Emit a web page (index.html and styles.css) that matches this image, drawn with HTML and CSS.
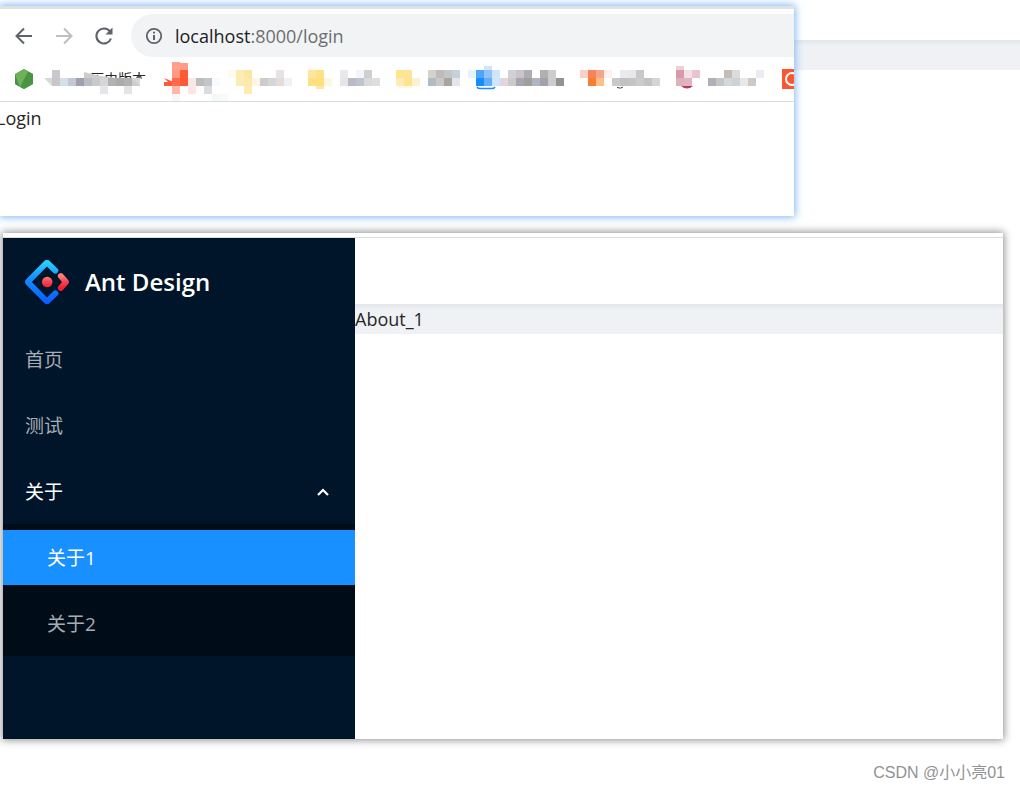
FILE: index.html
```html
<!DOCTYPE html>
<html lang="zh-CN">
<head>
<meta charset="utf-8">
<title>Ant Design</title>
<link rel="stylesheet" href="styles.css">
</head>
<body>
<section class="stage">
  <div class="band backdrop"></div>
  <div class="browser">
    <div class="toolbar">
      <button class="tool" aria-label="Back"><svg width="20" height="20" viewBox="0 0 20 20"><path d="M18 10H3M10 2.500L2.500 10L10 17.500" fill="none" stroke="#5f6368" stroke-width="2"/></svg></button>
      <button class="tool" aria-label="Forward"><svg width="20" height="20" viewBox="0 0 20 20"><path d="M2 10H17M10 2.500L17.500 10L10 17.500" fill="none" stroke="#bdbebf" stroke-width="2"/></svg></button>
      <button class="tool" aria-label="Reload"><svg width="20" height="20" viewBox="0 0 20 20"><path d="M16 5.500A7.500 7.500 0 1 0 17 12.500" fill="none" stroke="#5f6368" stroke-width="2.100"/><path d="M18.500 1.500V8.500H11.500Z" fill="#5f6368"/></svg></button>
      <div class="address">
        <svg width="18" height="18" viewBox="0 0 18 18"><circle cx="9" cy="9" r="7.200" fill="none" stroke="#5f6368" stroke-width="1.800"/><path d="M9 8V13M9 4.800V6.600" stroke="#5f6368" stroke-width="2"/></svg>
        <span class="url">localhost<span class="path">:8000/login</span></span>
      </div>
    </div>
    <nav class="bookmarks">
      <a class="bookmark" href="#"><svg width="20" height="20" viewBox="0 0 20 20"><path d="M10 0L19 5V15L10 20L1 15V5Z" fill="#5fa64d"/><path d="M1 5L6 18L1 15Z" fill="#479244"/><path d="M14 2.500L19 5V15L10 20L6 18Z" fill="#499544"/><path d="M10 0L14 2.500L6 18L1 5Z" fill="#6db158"/></svg><span>历史版本</span></a>
      <svg class="mosaic" width="800" height="46" viewBox="0 58 800 46">
        <path d="M84 84L148 78V86L132 96L96 92Z M132 96L240 92L210 103L136 103Z" fill="#fff"/>
        <path d="M44 78H140L140 86H52Z" fill="#d8d8d8"/>
        <path d="M84 72L100 76L134 80L140 86H84Z" fill="#cdcdcd"/>
        <rect x="52" y="70" fill="#c9c9cb"/><rect x="52" y="78" fill="#c8c6c8"/><rect x="60" y="78" fill="#d4e0ec"/><rect x="68" y="78" fill="#c4c8d0"/><rect x="76" y="78" fill="#a0a0ac"/><rect x="84" y="78" fill="#b8bcc4"/><rect x="92" y="78" fill="#cac8c8"/><rect x="100" y="78" fill="#d6d6d6"/><rect x="108" y="78" fill="#b0b2b6"/><rect x="116" y="78" fill="#a8acac"/><rect x="124" y="78" fill="#b4b2b0"/><rect x="100" y="86" fill="#e4e6ec"/><rect x="124" y="86" fill="#e4e4e4"/>
        <path d="M164 78L174 82V86H164V82H168Z" fill="#ff5c3c"/>
        <rect x="172" y="62" fill="#ffa08a"/><rect x="180" y="63" fill="#ff9c88"/><rect x="172" y="70" fill="#ff9a80"/><rect x="180" y="70" fill="#ff5a36"/><rect x="172" y="78" fill="#ff6a4c"/><rect x="180" y="78" fill="#ff5835"/><rect x="188" y="78" fill="#f6e8e6"/><rect x="172" y="86" fill="#ffb8a8"/><rect x="188" y="86" fill="#ffe6e4"/><rect x="172" y="94" fill="#f6f8f8"/>
        <rect x="196" y="78" fill="#bcbcb8"/><rect x="204" y="78" fill="#c0c6ca"/><rect x="212" y="78" fill="#f6fbff"/><rect x="204" y="86" fill="#dadcdf"/><rect x="212" y="94" fill="#f5f8f8"/><rect x="220" y="94" fill="#f8fafa"/>
        <rect x="228" y="70" fill="#fffaea"/><rect x="236" y="70" fill="#fbebb4"/><rect x="244" y="70" fill="#fbe6a2"/><rect x="236" y="78" fill="#fbebb4"/><rect x="244" y="78" fill="#fbeaaf"/><rect x="252" y="78" fill="#fdf6e0"/><rect x="244" y="86" fill="#fdebb2"/><rect x="260" y="78" fill="#cccccc"/><rect x="268" y="78" fill="#d6d6d6"/><rect x="276" y="78" fill="#e4dcd6"/><rect x="284" y="78" fill="#edf0f6"/><rect x="276" y="70" fill="#e6e3e6"/>
        <rect x="308" y="68" fill="#fff8e0"/><rect x="316" y="81" fill="#fee8a0"/><rect x="308" y="70" fill="#fde6a0"/><rect x="316" y="70" fill="#fde182"/><rect x="308" y="78" fill="#fde082"/><rect x="316" y="78" fill="#fde080"/><rect x="324" y="78" fill="#fdf6e0"/><rect x="340" y="70" fill="#e8e8ea"/><rect x="356" y="70" fill="#f2f5fb"/><rect x="364" y="70" fill="#ccd0d0"/><rect x="340" y="78" fill="#e6e6e8"/><rect x="348" y="78" fill="#b9bac4"/><rect x="356" y="78" fill="#bdc4cb"/><rect x="364" y="78" fill="#dadadb"/><rect x="372" y="78" fill="#dedede"/>
        <rect x="396" y="70" fill="#fee48a"/><rect x="404" y="70" fill="#fee498"/><rect x="396" y="78" fill="#feecb8"/><rect x="404" y="78" fill="#fee48f"/><rect x="412" y="78" fill="#fdf2d0"/><path d="M398 87H413" stroke="#fdf2c8"/><rect x="428" y="70" fill="#d4d2cb"/><rect x="436" y="70" fill="#c0bab8"/><rect x="444" y="70" fill="#c3c6c8"/><rect x="452" y="70" fill="#c8d0dc"/><rect x="428" y="78" fill="#b2bac8"/><rect x="436" y="78" fill="#c8c8c8"/><rect x="444" y="78" fill="#aba5a0"/><rect x="452" y="78" fill="#e4e6ec"/>
        <rect x="484" y="66" fill="#cfe5fd"/><rect x="468" y="70" fill="#e6f2ff"/><rect x="476" y="70" fill="#4fa5f6"/><rect x="484" y="70" fill="#8fc3f8"/><rect x="492" y="70" fill="#cfe5fd"/><rect x="476" y="78" fill="#1a8cf8"/><rect x="484" y="78" fill="#63aef8"/><rect x="492" y="78" fill="#cfe5fd"/><path d="M477 87Q478 88.500 480 88.500H492Q494 88.500 495 87" fill="none" stroke="#1a8cf8" stroke-width="1.500"/>
        <rect x="500" y="78" fill="#e0d6dc"/><rect x="508" y="70" fill="#d0d0d6"/><rect x="516" y="70" fill="#cac4ca"/><rect x="524" y="70" fill="#b0adb2"/><rect x="540" y="70" fill="#b0b0ac"/><rect x="548" y="70" fill="#cccccc"/><rect x="508" y="78" fill="#cacaca"/><rect x="516" y="78" fill="#a9a4ae"/><rect x="524" y="78" fill="#9fa09c"/><rect x="532" y="78" fill="#b0b6c0"/><rect x="540" y="78" fill="#a2a2ae"/><rect x="548" y="78" fill="#cccccc"/><rect x="556" y="78" fill="#939392"/>
        <rect x="580" y="70" fill="#fbcfc4"/><rect x="588" y="70" fill="#f4835e"/><rect x="596" y="70" fill="#f4a488"/><rect x="604" y="70" fill="#fff0ee"/><rect x="588" y="78" fill="#f87e30"/><rect x="596" y="78" fill="#fdbe88"/><rect x="612" y="78" fill="#cac9ca"/><rect x="620" y="78" fill="#bfc1c5"/><rect x="628" y="78" fill="#c3c4c4"/><rect x="636" y="78" fill="#cdcbc8"/><rect x="644" y="78" fill="#c4c2c2"/><rect x="652" y="78" fill="#d5d5d5"/><rect x="620" y="70" fill="#eaebef"/><rect x="628" y="70" fill="#e8e8ea"/><rect x="636" y="70" fill="#c7c8ca"/><path d="M617 87.500Q621 89 623 87" fill="none" stroke="#444"/>
        <rect x="676" y="66" fill="#edd0d8"/><rect x="676" y="70" fill="#d89aaa"/><rect x="684" y="70" fill="#f2e0e4"/><rect x="692" y="70" fill="#e8c4ce"/><rect x="676" y="78" fill="#deb0bc"/><rect x="684" y="78" fill="#deb4c0"/><path d="M681 86H693Q687 91 681 86Z" fill="#b83a5a"/><rect x="708" y="78" fill="#b0b0b8"/><rect x="716" y="78" fill="#c6c6c8"/><rect x="724" y="78" fill="#d4d6d8"/><rect x="732" y="78" fill="#ccd2da"/><rect x="740" y="78" fill="#e8e8e8"/><rect x="748" y="78" fill="#ccc9c9"/><rect x="724" y="70" fill="#c4bcb8"/><rect x="732" y="70" fill="#dcdcdc"/><rect x="756" y="70" fill="#ebecf2"/>
        <path d="M782 69H800V89H782Z" fill="#fc5531"/><circle cx="792" cy="79" r="6" fill="none" stroke="#fff" stroke-width="2"/>
      </svg>
    </nav>
    <main class="login">Login</main>
  </div>
</section>

<section class="admin">
  <aside class="sidebar">
    <a class="brand" href="#">
      <svg width="44" height="44" viewBox="0 0 200 200">
        <defs>
          <linearGradient id="blue" x1="0" y1="0" x2="0" y2="1"><stop offset="0" stop-color="#29cdff"/><stop offset=".4" stop-color="#148eff"/><stop offset="1" stop-color="#0a60ff"/></linearGradient>
          <linearGradient id="red" x1="0" y1="0" x2="0" y2="1"><stop offset="0" stop-color="#fa816e"/><stop offset=".4" stop-color="#f74a5c"/><stop offset="1" stop-color="#f51d2c"/></linearGradient>
        </defs>
        <g fill="none" stroke-width="27" stroke-linecap="round" stroke-linejoin="round">
          <path d="M138 48L105 16Q100 11 95 16L17 95Q12 100 17 105L95 184Q100 189 105 184L138 152" stroke="url(#blue)"/>
          <path d="M163 73L186 100L163 127" stroke="url(#red)"/>
        </g>
        <circle cx="101" cy="100" r="24" fill="url(#red)"/>
      </svg>
      <span>Ant Design</span>
    </a>
    <nav class="menu">
      <a class="item" href="#">首页</a>
      <a class="item" href="#">测试</a>
      <button class="item open" aria-expanded="true">关于<svg width="14" height="10" viewBox="0 0 14 10"><path d="M2 8L7 3L12 8" fill="none" stroke="#fff" stroke-width="2.200"/></svg></button>
      <div class="submenu">
        <a class="item selected" href="#">关于1</a>
        <a class="item" href="#">关于2</a>
      </div>
    </nav>
  </aside>
  <div class="content">
    <header class="topbar"></header>
    <main class="band">About_1</main>
  </div>
</section>
<footer class="credit">CSDN @小小亮01</footer>
</body>
</html>
```
FILE: styles.css
```css
* { box-sizing: border-box; }
body {
  margin: 0;
  background: #fff;
  color: #262626;
  font: 18px/30px "Open Sans", "Noto Sans CJK SC", sans-serif;
  overflow-x: hidden;
}
button { border: 0; background: none; padding: 0; font: inherit; }
a { text-decoration: none; color: inherit; }
svg { display: block; flex: none; }

.stage { position: relative; padding-top: 6px; }
.band {
  min-height: 30px;
  background: linear-gradient(#e2e6e9, #eff1f5 6px);
}
.backdrop { position: absolute; top: 40px; left: 0; right: 0; }
.browser {
  position: relative;
  width: calc(100% - 226px);
  min-height: 210px;
  background: #fff;
  border-top: 3px solid #dee1e6;
  box-shadow: 0 0 8px 1px #7ab2f6;
}
.toolbar {
  display: flex;
  align-items: center;
  gap: 20px;
  padding: 5px 0 0 14px;
}
.tool { width: 20px; height: 20px; }
.address {
  flex: 1;
  display: flex;
  align-items: center;
  gap: 12px;
  height: 43px;
  margin-left: -3px;
  padding-left: 14px;
  border-radius: 22px 0 0 22px;
  background: #f1f3f4;
}
.url { color: #202124; }
.path { color: #6b6f73; }
.bookmarks {
  position: relative;
  display: flex;
  align-items: center;
  height: 45px;
  padding-left: 14px;
  border-bottom: 1px solid #d9dadb;
  overflow: hidden;
}
.bookmark { display: flex; align-items: center; gap: 56px; font-size: 14px; }
.mosaic { position: absolute; top: 1px; left: 0; }
.mosaic rect { width: 8px; height: 8px; }
.login { margin-left: -4px; padding-top: 1px; }

.admin {
  position: relative;
  display: flex;
  margin: 17px 17px 0 3px;
  padding-top: 5px;
  background: linear-gradient(#fff 4px, #dcdcdc 4px, #dcdcdc 5px, #fff 5px);
  box-shadow: 0 0 8px 1px rgba(0, 0, 0, .45);
}
.sidebar {
  width: 352px;
  min-height: 501px;
  background: #001529;
  color: #a6adb4;
}
.brand {
  display: flex;
  align-items: center;
  gap: 16px;
  height: 88px;
  padding-left: 22px;
  color: #fff;
  font-size: 24px;
  font-weight: 600;
}
.menu { padding-top: 6px; }
.item {
  display: flex;
  align-items: center;
  justify-content: space-between;
  width: 100%;
  height: 55px;
  margin-bottom: 11px;
  padding: 0 25px 0 22px;
  color: inherit;
  font-size: 19px;
}
.open { margin-bottom: 5px; color: #fff; }
.submenu { padding: 6px 0 5px; background: #000c17; }
.submenu .item { padding-left: 44px; }
.submenu .item:last-child { margin-bottom: 0; }
.selected { background: #1890ff; color: #fff; }
.content { flex: 1; }
.topbar { height: 66px; }

.credit {
  padding: 19px 15px 0 0;
  text-align: right;
  color: #929292;
  font-family: "Liberation Sans", "Noto Sans CJK SC", sans-serif;
  font-size: 16px;
}
```
